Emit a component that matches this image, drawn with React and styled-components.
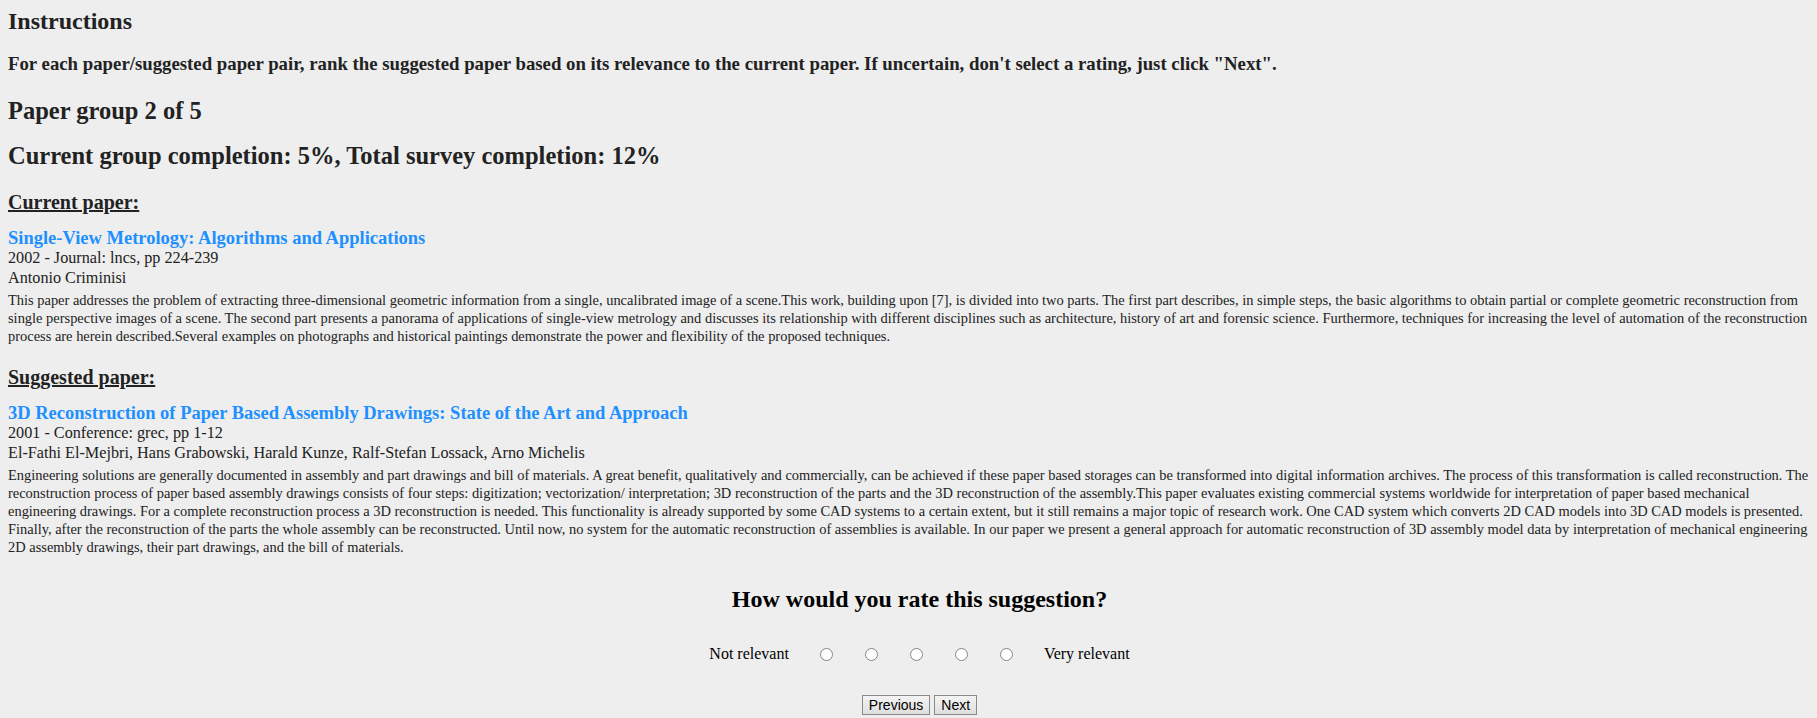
import React from 'react'
import styled, { createGlobalStyle } from 'styled-components'

const GlobalStyle = createGlobalStyle`
  html, body {
    margin: 0;
    background: #eeeeee;
  }
  body {
    padding: 0 8px;
    font-family: "Liberation Serif", "Times New Roman", serif;
    color: #222222;
  }
`

const Page = styled.div`
  padding-top: 7px;
  padding-bottom: 4px;
`

const Heading = styled.h2`
  margin: ${(p) => p.top || 0}px 0 0;
  font-size: ${(p) => p.size || 24.5}px;
  font-weight: bold;
  line-height: 28px;
`

const Lead = styled.h3`
  margin: 18px 0 0;
  font-size: 18.8px;
  font-weight: bold;
  line-height: 22px;
`

const SectionLabel = styled.h3`
  margin: 21px 0 0;
  font-size: 20px;
  font-weight: bold;
  line-height: 23px;
  text-decoration: underline;
`

const Paper = styled.div`
  margin-top: 15px;
`

const PaperTitle = styled.a`
  display: block;
  font-size: 18.5px;
  font-weight: bold;
  color: #1e90ff;
  text-decoration: none;
  line-height: 19px;
`

const Meta = styled.div`
  font-size: 16.2px;
  line-height: 20px;
`

const Abstract = styled.p`
  margin: 3px 0 0;
  font-size: 14.45px;
  line-height: 18px;
`

const Rating = styled.div`
  margin-top: 29px;
  padding-left: 22px;
  display: flex;
  flex-direction: column;
  align-items: center;
  color: #000;
`

const Question = styled.h2`
  margin: 0;
  font-size: 24px;
  font-weight: bold;
  line-height: 28px;
`

const Scale = styled.div`
  margin-top: 31px;
  display: flex;
  align-items: center;
  font-size: 16px;
  line-height: 20px;
`

const ScaleLabel = styled.span`
  margin: ${(p) => (p.end ? '0 0 0 15px' : '0 15px 0 0')};
`

const Radio = styled.input.attrs({ type: 'radio', name: 'rating' })`
  width: 13px;
  height: 13px;
  margin: 0 16px;
  appearance: none;
  border: 1px solid #858585;
  border-radius: 50%;
  background: #fff;
`

const Nav = styled.div`
  margin-top: 31px;
  display: flex;
  gap: 4px;
`

const NavButton = styled.button`
  font-family: "Liberation Sans", Arial, sans-serif;
  font-size: 14px;
  color: #000;
  padding: 0 6px;
  height: 20px;
  border: 1px solid #8a8a8a;
  border-radius: 0;
  background: linear-gradient(#f4f4f4, #dedede);
`

const papers = {
  current: {
    title: 'Single-View Metrology: Algorithms and Applications',
    venue: '2002 - Journal: lncs, pp 224-239',
    authors: 'Antonio Criminisi',
    abstract:
      'This paper addresses the problem of extracting three-dimensional geometric information from a single, uncalibrated image of a scene.This work, building upon [7], is divided into two parts. The first part describes, in simple steps, the basic algorithms to obtain partial or complete geometric reconstruction from single perspective images of a scene. The second part presents a panorama of applications of single-view metrology and discusses its relationship with different disciplines such as architecture, history of art and forensic science. Furthermore, techniques for increasing the level of automation of the reconstruction process are herein described.Several examples on photographs and historical paintings demonstrate the power and flexibility of the proposed techniques.',
  },
  suggested: {
    title: '3D Reconstruction of Paper Based Assembly Drawings: State of the Art and Approach',
    venue: '2001 - Conference: grec, pp 1-12',
    authors: 'El-Fathi El-Mejbri, Hans Grabowski, Harald Kunze, Ralf-Stefan Lossack, Arno Michelis',
    abstract:
      'Engineering solutions are generally documented in assembly and part drawings and bill of materials. A great benefit, qualitatively and commercially, can be achieved if these paper based storages can be transformed into digital information archives. The process of this transformation is called reconstruction. The reconstruction process of paper based assembly drawings consists of four steps: digitization; vectorization/ interpretation; 3D reconstruction of the parts and the 3D reconstruction of the assembly.This paper evaluates existing commercial systems worldwide for interpretation of paper based mechanical engineering drawings. For a complete reconstruction process a 3D reconstruction is needed. This functionality is already supported by some CAD systems to a certain extent, but it still remains a major topic of research work. One CAD system which converts 2D CAD models into 3D CAD models is presented. Finally, after the reconstruction of the parts the whole assembly can be reconstructed. Until now, no system for the automatic reconstruction of assemblies is available. In our paper we present a general approach for automatic reconstruction of 3D assembly model data by interpretation of mechanical engineering 2D assembly drawings, their part drawings, and the bill of materials.',
  },
}

const PaperBlock = ({ paper }) => (
  <Paper>
    <PaperTitle href="#">{paper.title}</PaperTitle>
    <Meta>{paper.venue}</Meta>
    <Meta>{paper.authors}</Meta>
    <Abstract>{paper.abstract}</Abstract>
  </Paper>
)

const App = () => (
  <>
    <GlobalStyle />
    <Page>
      <Heading size={24}>Instructions</Heading>
      <Lead>
        For each paper/suggested paper pair, rank the suggested paper based on its relevance to the current paper.
        If uncertain, don't select a rating, just click "Next".
      </Lead>
      <Heading top={22}>Paper group 2 of 5</Heading>
      <Heading top={17}>Current group completion: 5%, Total survey completion: 12%</Heading>

      <SectionLabel>Current paper:</SectionLabel>
      <PaperBlock paper={papers.current} />

      <SectionLabel>Suggested paper:</SectionLabel>
      <PaperBlock paper={papers.suggested} />

      <Rating>
        <Question>How would you rate this suggestion?</Question>
        <Scale>
          <ScaleLabel>Not relevant</ScaleLabel>
          {[1, 2, 3, 4, 5].map((n) => (
            <Radio key={n} value={n} />
          ))}
          <ScaleLabel end>Very relevant</ScaleLabel>
        </Scale>
        <Nav>
          <NavButton>Previous</NavButton>
          <NavButton>Next</NavButton>
        </Nav>
      </Rating>
    </Page>
  </>
)

export default App
